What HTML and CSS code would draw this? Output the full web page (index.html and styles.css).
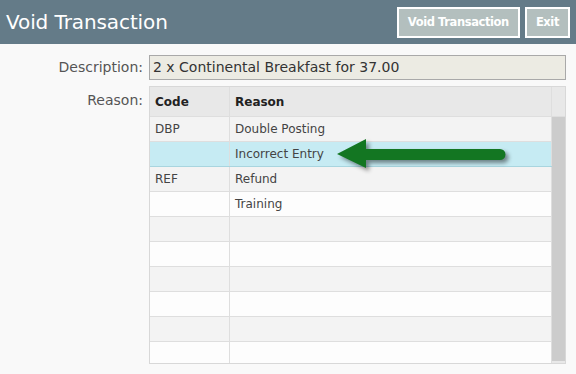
FILE: index.html
```html
<!DOCTYPE html>
<html lang="en">
<head>
  <meta charset="UTF-8">
  <title>Void Transaction</title>
  <link rel="stylesheet" href="styles.css">
</head>
<body>
  <div class="topbar">
    <h1>Void Transaction</h1>
    <div class="actions">
      <button class="btn">Void Transaction</button>
      <button class="btn">Exit</button>
    </div>
  </div>

  <div class="form">
    <label class="label">Description:</label>
    <div class="input">2 x Continental Breakfast for 37.00</div>

    <label class="label label-top">Reason:</label>
    <div class="grid-wrap">
      <div class="grid">
        <table>
          <thead>
            <tr><th class="col-code">Code</th><th>Reason</th></tr>
          </thead>
          <tbody>
            <tr><td>DBP</td><td>Double Posting</td></tr>
            <tr class="selected"><td></td><td>Incorrect Entry</td></tr>
            <tr><td>REF</td><td>Refund</td></tr>
            <tr><td></td><td>Training</td></tr>
            <tr><td></td><td></td></tr>
            <tr><td></td><td></td></tr>
            <tr><td></td><td></td></tr>
            <tr><td></td><td></td></tr>
            <tr><td></td><td></td></tr>
            <tr><td></td><td></td></tr>
          </tbody>
        </table>
        <div class="scrollbar">
          <div class="scroll-head"></div>
          <div class="scroll-thumb"></div>
        </div>
      </div>
      <svg class="arrow" width="185" height="40" viewBox="0 0 185 40">
        <path d="M7 19 L36 4 L36 14 L170 14 A5.5 5.5 0 0 1 170 25 L36 25 L36 33 Z" fill="#137622"/>
      </svg>
    </div>
  </div>
</body>
</html>
```

FILE: styles.css
```css
body {
  margin: 0;
  background: #f9f9f9;
  font-family: "DejaVu Sans", Verdana, sans-serif;
  color: #333;
}
.topbar {
  height: 44px;
  background: #647b88;
  display: flex;
  align-items: center;
  justify-content: space-between;
  padding: 0 6px 0 6px;
}
.topbar h1 {
  margin: 0;
  font-size: 20px;
  font-weight: normal;
  color: #fff;
  letter-spacing: -0.1px;
}
.actions {
  display: flex;
  gap: 5px;
}
.btn {
  height: 31px;
  background: #b3bfbe;
  border: 2px solid #fff;
  color: #fff;
  font-family: "DejaVu Sans", Verdana, sans-serif;
  font-size: 11.5px;
  font-weight: bold;
  padding: 0 9px;
  letter-spacing: -0.4px;
}
.form {
  display: grid;
  grid-template-columns: 143px 417px;
  column-gap: 6px;
  row-gap: 6px;
  padding-top: 11px;
}
.label {
  text-align: right;
  font-size: 14px;
  color: #555;
  line-height: 25px;
}
.label-top {
  line-height: 28px;
}
.input {
  height: 25px;
  box-sizing: border-box;
  border: 1px solid #a9a9a9;
  background: #ecebe3;
  font-size: 14px;
  line-height: 23px;
  padding: 0 3px;
  color: #333;
}
.grid-wrap {
  position: relative;
}
.grid {
  height: 278px;
  box-sizing: border-box;
  border: 1px solid #d8d8d8;
  display: flex;
  overflow: hidden;
  background: #fff;
}
table {
  flex: 1;
  border-collapse: collapse;
  font-size: 12px;
  align-self: flex-start;
}
th, td {
  text-align: left;
  padding: 0 5px;
  border: 1px solid #dedede;
  border-top: none;
  border-left: none;
}
th {
  height: 29px;
  background: #e8e8e8;
  font-weight: bold;
  color: #222;
}
td {
  height: 24px;
  color: #444;
}
.col-code {
  width: 69px;
}
tbody tr:nth-child(odd) td {
  background: #f3f3f3;
}
tbody tr:nth-child(even) td {
  background: #fdfdfd;
}
tbody tr.selected td {
  background: #c6ebf3;
  border-bottom-color: #a8d5df;
}
.scrollbar {
  width: 13px;
  display: flex;
  flex-direction: column;
  background: #e8e8e8;
}
.scroll-head {
  height: 29px;
  background: #e8e8e8;
  border-bottom: 1px solid #dedede;
}
.scroll-thumb {
  height: 244px;
  background: #cccccc;
}
.arrow {
  position: absolute;
  left: 181px;
  top: 49px;
  filter: drop-shadow(3px 3px 2px rgba(0, 0, 0, 0.45));
}
```
